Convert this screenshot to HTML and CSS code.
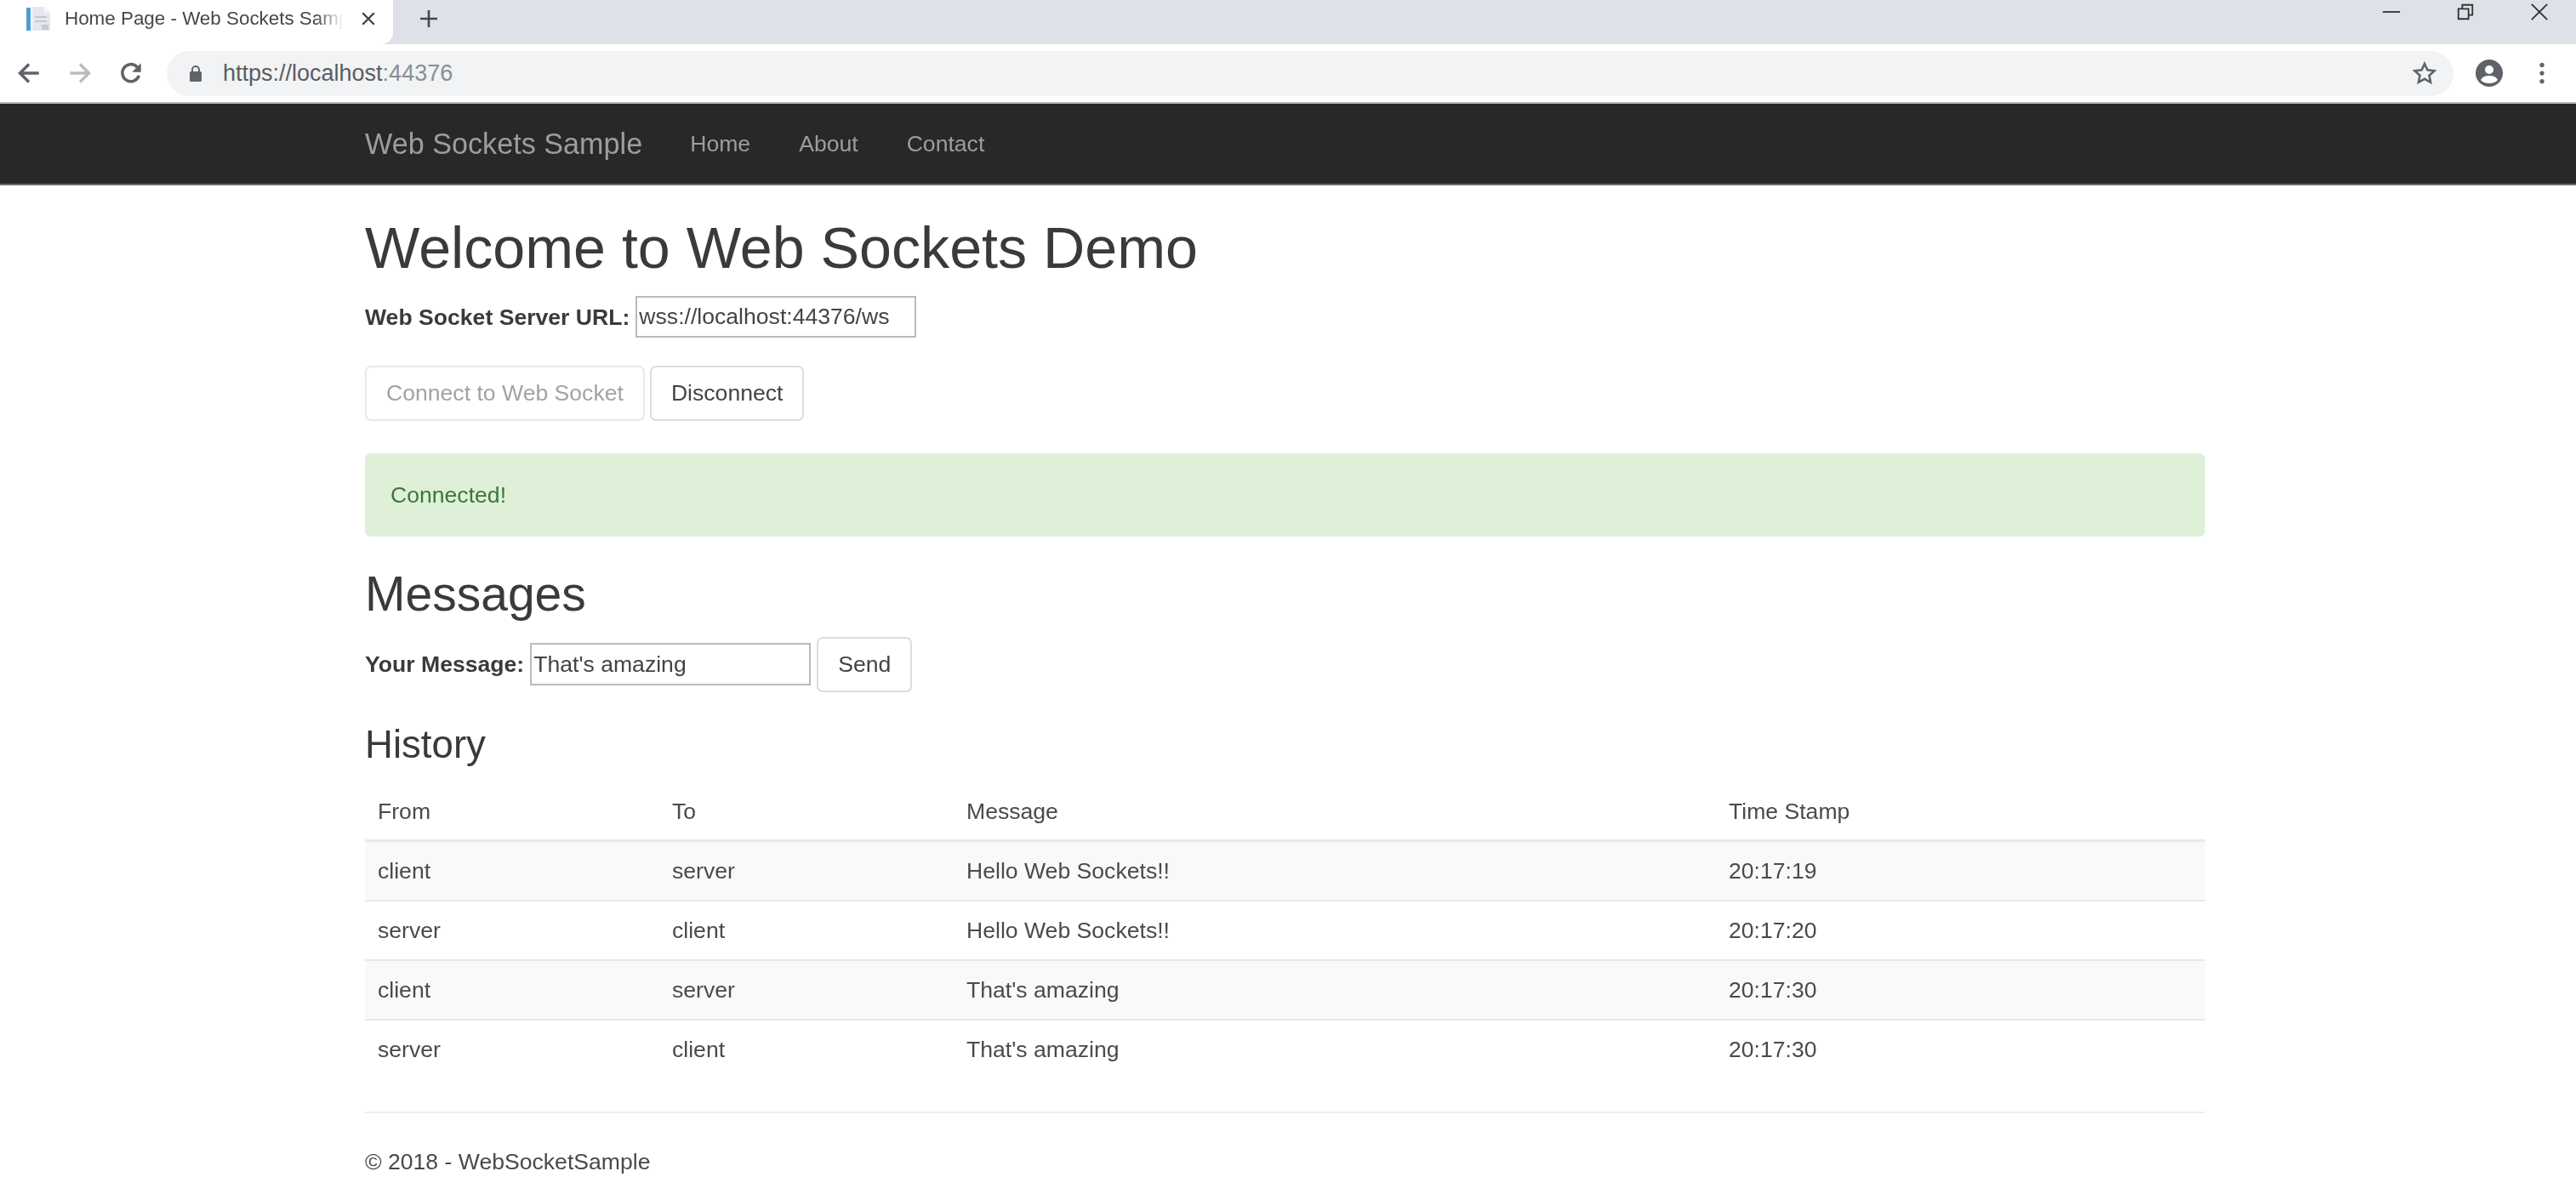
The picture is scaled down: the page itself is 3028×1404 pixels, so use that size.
FILE: index.html
```html
<!DOCTYPE html>
<html lang="en">
<head>
    <meta charset="UTF-8">
    <title>Home Page - Web Sockets Sample</title>
    <link rel="stylesheet" href="styles.css">
</head>
<body>
    <div class="tab-strip">
        <div class="tab">
            <svg class="tab-icon" viewBox="0 0 32 32"><rect x="1" y="3" width="5" height="27" fill="#4a9fd4"/><path d="M8 2h14l7 7v21H8z" fill="#e4e8ee"/><path d="M22 2v7h7z" fill="#f5f6f8"/><rect x="11" y="13" width="14" height="2" fill="#c3c9d2"/><rect x="11" y="18" width="14" height="2" fill="#c3c9d2"/><rect x="19" y="23" width="8" height="6" fill="#c3c9d2"/></svg>
            <span class="tab-title">Home Page - Web Sockets Sample</span>
            <svg class="tab-close" viewBox="0 0 16 16"><path d="M2 2l12 12M14 2L2 14" stroke="#3c4043" stroke-width="2" fill="none"/></svg>
        </div>
        <svg class="new-tab" viewBox="0 0 24 24"><path d="M12 2v20M2 12h20" stroke="#44474b" stroke-width="2.6" fill="none"/></svg>
        <div class="window-controls">
            <svg viewBox="0 0 24 24"><path d="M1 12h22" stroke="#333" stroke-width="2"/></svg>
            <svg viewBox="0 0 24 24"><path d="M3 8h13v13H3zM8 8V3h13v13h-5" stroke="#333" stroke-width="2" fill="none"/></svg>
            <svg viewBox="0 0 24 24"><path d="M2 2l20 20M22 2L2 22" stroke="#333" stroke-width="2" fill="none"/></svg>
        </div>
    </div>

    <div class="toolbar">
        <svg class="tool-icon" viewBox="0 0 24 24"><path d="M22 12H4M12 3l-9 9 9 9" stroke="#5f6368" stroke-width="3" fill="none"/></svg>
        <svg class="tool-icon" viewBox="0 0 24 24"><path d="M2 12h18M12 3l9 9-9 9" stroke="#b9bcc0" stroke-width="3" fill="none"/></svg>
        <svg class="tool-icon" viewBox="0 0 24 24"><path d="M20 14.5A8.6 8.6 0 1 1 18.3 6" stroke="#5f6368" stroke-width="3" fill="none"/><path d="M22 2v9h-9z" fill="#5f6368"/></svg>
        <div class="address-bar">
            <svg class="lock" viewBox="0 0 16 20"><path d="M4 9V6a4 4 0 0 1 8 0v3" stroke="#5f6368" stroke-width="2" fill="none"/><rect x="1" y="8" width="14" height="12" rx="1.5" fill="#5f6368"/></svg>
            <span class="url">https://localhost<span class="url-port">:44376</span></span>
            <svg class="star" viewBox="0 0 24 24"><path d="M12 2.5l2.9 6.4 7 .8-5.2 4.7 1.4 6.9-6.100-3.500-6.100 3.500 1.400-6.900-5.200-4.700 7-.8z" stroke="#5f6368" stroke-width="2.200" fill="none"/></svg>
        </div>
        <svg class="account" viewBox="0 0 32 32"><circle cx="16" cy="16" r="16" fill="#5f6368"/><circle cx="16" cy="12" r="5" fill="#fff"/><path d="M6 24c2-4 6-5 10-5s8 1 10 5c-2 2.500-6 4-10 4s-8-1.500-10-4z" fill="#fff"/></svg>
        <svg class="menu-dots" viewBox="0 0 8 32"><circle cx="4" cy="5" r="3" fill="#5f6368"/><circle cx="4" cy="16" r="3" fill="#5f6368"/><circle cx="4" cy="27" r="3" fill="#5f6368"/></svg>
    </div>

    <nav class="navbar">
        <div class="container navbar-inner">
            <a class="brand">Web Sockets Sample</a>
            <a class="nav-link">Home</a>
            <a class="nav-link">About</a>
            <a class="nav-link">Contact</a>
        </div>
    </nav>

    <div class="container">
        <h1>Welcome to Web Sockets Demo</h1>
        <div class="server-row">
            <label>Web Socket Server URL:</label>
            <input class="server-url" type="text" value="wss://localhost:44376/ws">
        </div>
        <div class="button-row">
            <button class="btn btn-disabled">Connect to Web Socket</button>
            <button class="btn">Disconnect</button>
        </div>
        <div class="alert">Connected!</div>

        <h2>Messages</h2>
        <div class="message-row">
            <label>Your Message:</label>
            <input class="message-input" type="text" value="That's amazing">
            <button class="btn">Send</button>
        </div>

        <h3>History</h3>
        <table class="history">
            <thead>
                <tr><th class="col-from">From</th><th class="col-to">To</th><th class="col-message">Message</th><th>Time Stamp</th></tr>
            </thead>
            <tbody>
                <tr><td>client</td><td>server</td><td>Hello Web Sockets!!</td><td>20:17:19</td></tr>
                <tr><td>server</td><td>client</td><td>Hello Web Sockets!!</td><td>20:17:20</td></tr>
                <tr><td>client</td><td>server</td><td>That's amazing</td><td>20:17:30</td></tr>
                <tr><td>server</td><td>client</td><td>That's amazing</td><td>20:17:30</td></tr>
            </tbody>
        </table>

        <hr>
        <footer>© 2018 - WebSocketSample</footer>
    </div>
</body>
</html>
```

FILE: styles.css
```css
/* Browser chrome first, then the page itself */
html, body {
    margin: 0;
    height: 1404px;
    overflow: hidden;
}
body {
    font-family: "Liberation Sans", Arial, sans-serif;
    font-size: 26.6px;
    line-height: 1.43;
    color: #3a3a3a;
    background: #fff;
    /* the reference is a soft upscale */
    filter: blur(0.6px);
}

.tab-strip {
    display: flex;
    align-items: center;
    height: 52px;
    background: #dee1e7;
}
.tab {
    display: flex;
    align-items: center;
    width: 462px;
    height: 52px;
    box-sizing: border-box;
    padding: 0 14px 8px 30px;
    background: #fff;
    border-radius: 0 0 14px 0;
    font-size: 22.4px;
}
.tab-icon {
    width: 32px;
    height: 32px;
    flex: none;
    margin-right: 14px;
}
.tab-title {
    flex: none;
    width: 328px;
    overflow: hidden;
    white-space: nowrap;
    color: #45474a;
    -webkit-mask-image: linear-gradient(to right, #000 90%, transparent);
    mask-image: linear-gradient(to right, #000 90%, transparent);
}
.tab-close {
    width: 18px;
    height: 18px;
    flex: none;
    margin-left: 20px;
}
.new-tab {
    width: 24px;
    height: 24px;
    margin-left: 30px;
    margin-bottom: 8px;
}
.window-controls {
    display: flex;
    gap: 65px;
    align-items: center;
    margin-left: auto;
    margin-right: 32px;
    padding-bottom: 24px;
}
.window-controls svg {
    width: 22px;
    height: 22px;
}

.toolbar {
    display: flex;
    align-items: center;
    height: 70px;
    box-sizing: border-box;
    padding: 0 28px 0 20px;
    background: #fff;
    border-bottom: 2px solid #b8b8b8;
}
.tool-icon {
    width: 28px;
    height: 28px;
    flex: none;
    margin-right: 32px;
}
.address-bar {
    display: flex;
    align-items: center;
    flex: 1;
    height: 53px;
    margin-left: -4px;
    padding: 0 20px 0 26px;
    border-radius: 27px;
    background: #f1f3f4;
    font-size: 27px;
}
.lock {
    width: 16px;
    height: 20px;
    margin-right: 24px;
}
.url {
    color: #5a5d61;
}
.url-port {
    color: #8a8e93;
}
.star {
    width: 28px;
    height: 28px;
    margin-left: auto;
}
.account {
    width: 32px;
    height: 32px;
    flex: none;
    margin-left: 26px;
}
.menu-dots {
    width: 8px;
    height: 28px;
    flex: none;
    margin-left: 42px;
    margin-right: 8px;
}

.navbar {
    height: 94px;
    background: #282828;
    border-bottom: 2px solid #6b6b6b;
}
.container {
    width: 2163px;
    margin-left: 429px;
}
.navbar-inner {
    display: flex;
    align-items: center;
    height: 94px;
}
.brand {
    font-size: 34.2px;
    color: #9d9d9d;
    margin-right: 56px;
}
.nav-link {
    color: #9d9d9d;
    margin-right: 57px;
}

h1, h2, h3 {
    font-weight: normal;
    line-height: 1.1;
    margin: 0;
}
h1 {
    font-size: 68.2px;
    padding-top: 36px;
}
h2 {
    font-size: 57px;
    margin-top: 36px;
}
h3 {
    font-size: 45.6px;
    margin-top: 37px;
}
label {
    font-weight: bold;
}
input {
    font-family: inherit;
    font-size: 26.6px;
    color: #444;
    padding: 0 2px;
    box-sizing: border-box;
    border: 2px solid #bbb;
    background: #fff;
}

.server-row {
    display: flex;
    align-items: center;
    gap: 7px;
    margin-top: 19px;
}
.server-url {
    width: 330px;
    height: 49px;
}
.button-row {
    display: flex;
    gap: 6px;
    margin-top: 33px;
}
.btn {
    font-family: inherit;
    font-size: 26.6px;
    color: #444;
    height: 65px;
    padding: 0 23px;
    background: #fff;
    border: 2px solid #dcdcdc;
    border-radius: 7px;
}
.btn-disabled {
    color: #a3a3a3;
    border-color: #e8e8e8;
}
.alert {
    display: flex;
    align-items: center;
    height: 98px;
    box-sizing: border-box;
    margin-top: 38px;
    padding: 0 30px;
    background: #dff0d8;
    border-radius: 7px;
    color: #3c763d;
}
.message-row {
    display: flex;
    align-items: center;
    gap: 7px;
    margin-top: 19px;
}
.message-input {
    width: 330px;
    height: 50px;
}
.history {
    width: 100%;
    table-layout: fixed;
    border-collapse: collapse;
    margin-top: 20px;
}
.col-from, .col-to {
    width: 346px;
}
.col-message {
    width: 896px;
}
th, td {
    font-weight: normal;
    text-align: left;
    height: 70px;
    box-sizing: border-box;
    padding: 0 15px;
    color: #4a4a4a;
}
th {
    height: 68px;
    border-bottom: 3px solid #e8e8e8;
}
tbody tr {
    border-bottom: 2px solid #e8e8e8;
}
tbody tr:last-child {
    border-bottom: none;
}
tbody tr:nth-child(odd) {
    background: #f9f9f9;
}
hr {
    border: none;
    border-top: 2px solid #eee;
    margin: 38px 0 0 0;
}
footer {
    margin-top: 38px;
    color: #4a4a4a;
}
```
